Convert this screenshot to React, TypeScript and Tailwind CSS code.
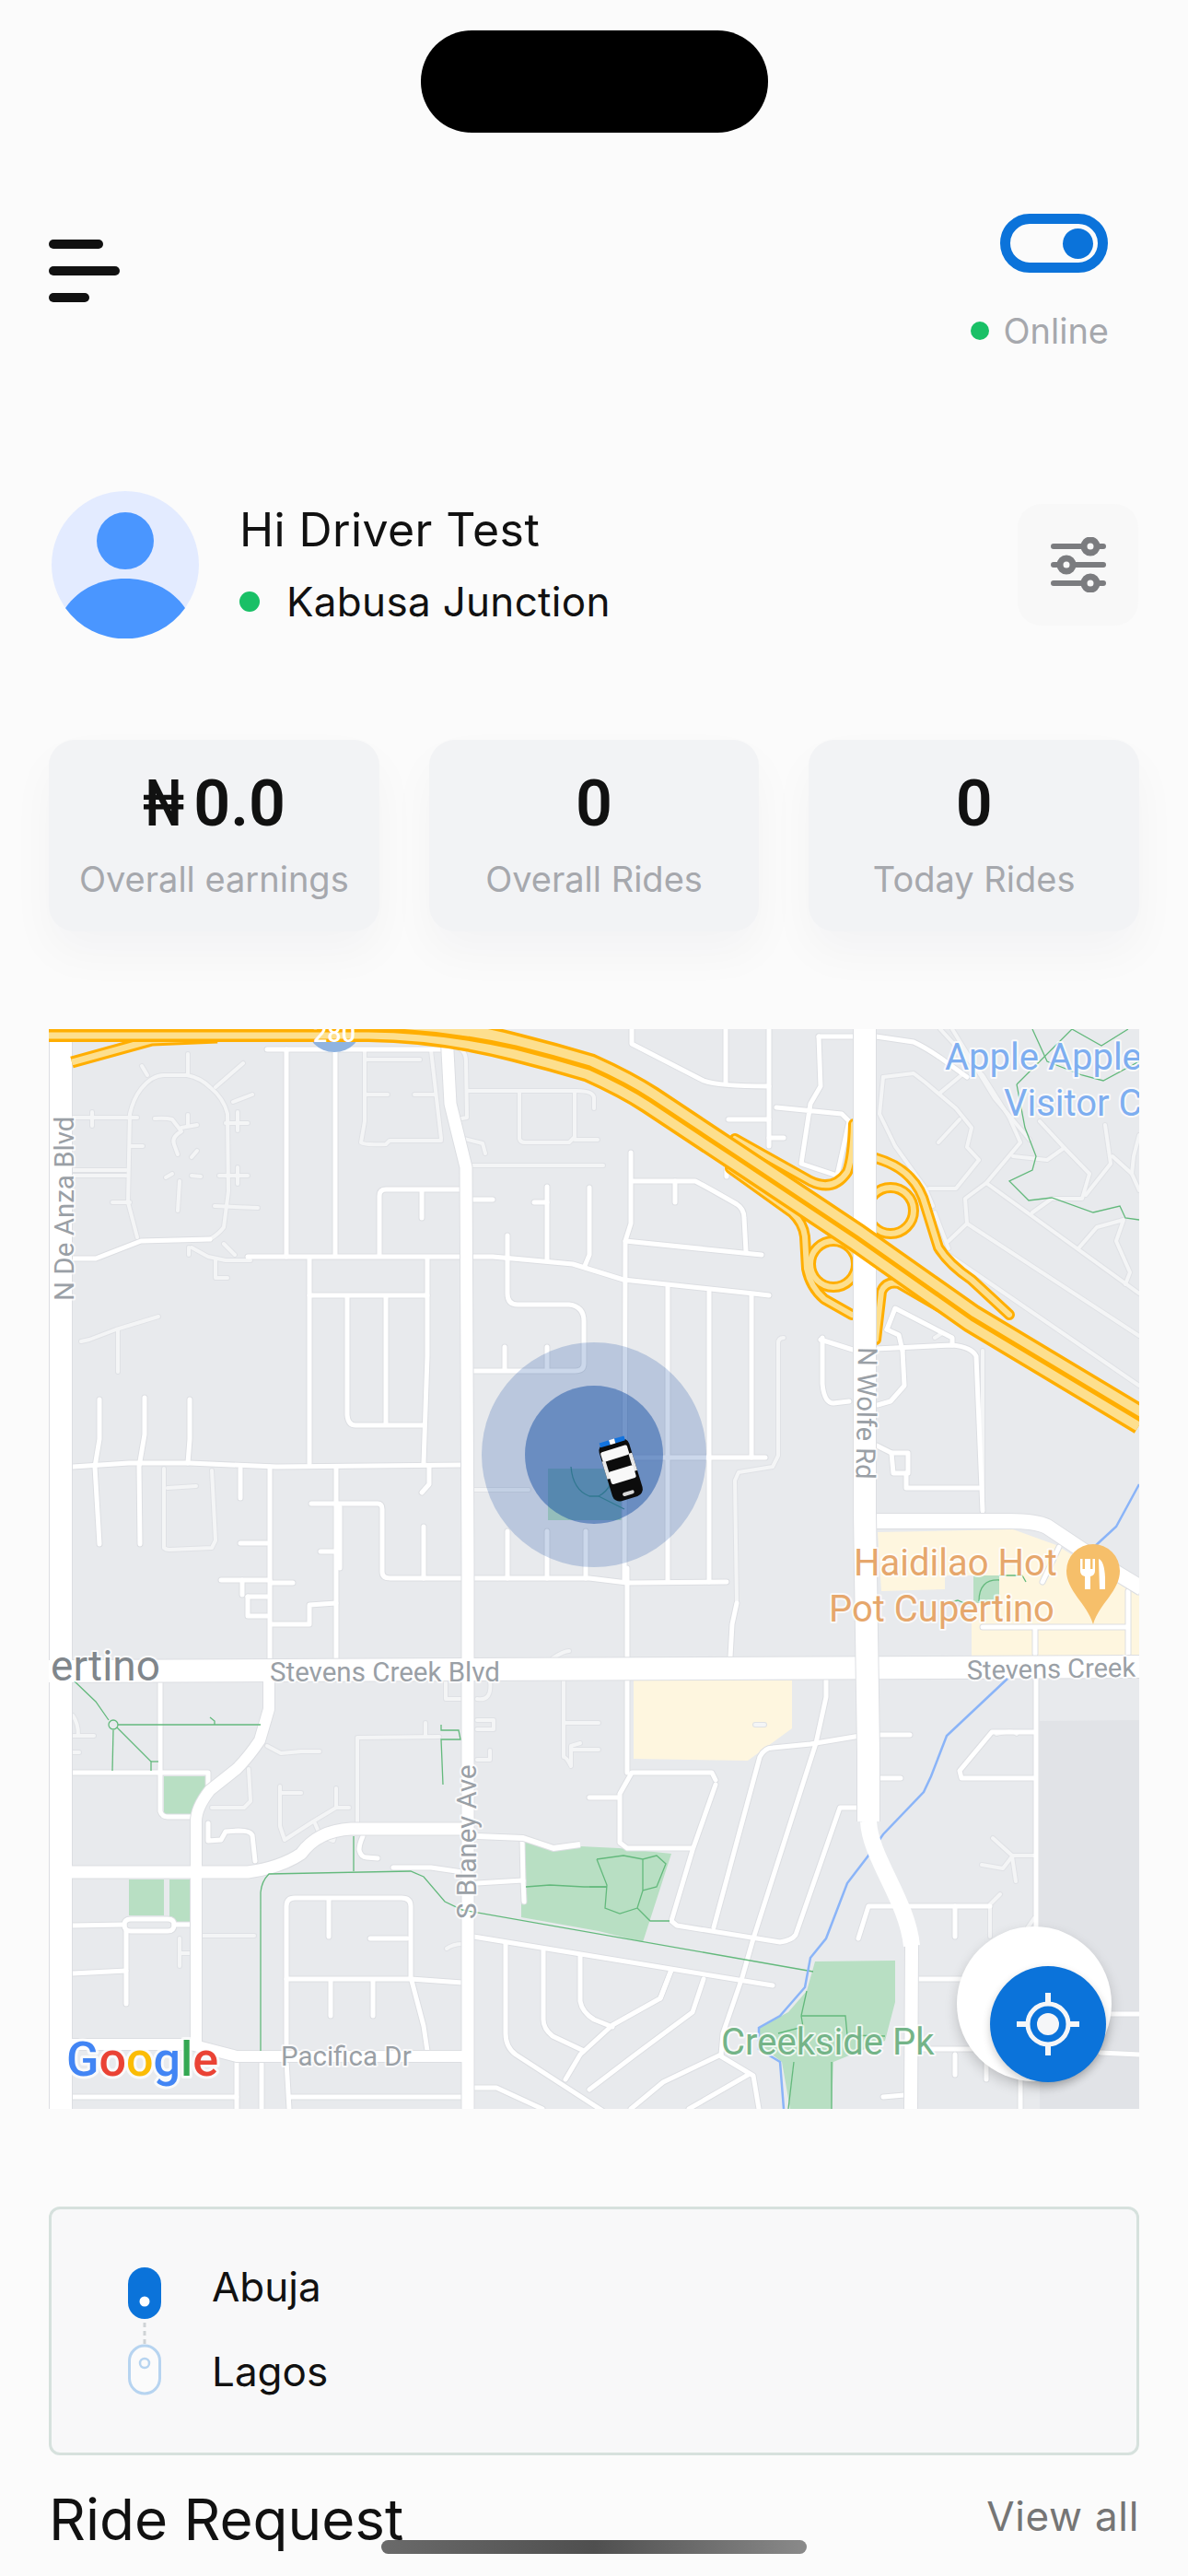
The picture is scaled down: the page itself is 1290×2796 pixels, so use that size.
const parks = [
  "M178,1926 L224,1926 L226,1937 L211,1967 L178,1967 Z",
  "M140,2038 H178 V2077 H140 Z",
  "M184,2038 H206 V2085 H184 Z",
  "M566,1995 L600,2005 L630,2002 L672,2004 L729,2010 L698,2106 L650,2094 L566,2079 Z",
  "M885,2127 L972,2126 L972,2171 L961,2213 L905,2236 L903,2287 L858,2287 L849,2236 L824,2217 L824,2199 L856,2182 L876,2159 Z",
  "M1057,1708 H1085 V1738 H1057 Z",
  "M595,1592 H678 V1648 H595 Z",
];

const beige = [
  "M688,1822 L860,1822 L860,1874 L812,1909 L688,1907 Z",
  "M953,1661 L1100,1658 L1147,1675 L1228,1725 L1237,1730 L1237,1795 L1055,1795 L1055,1737 L1085,1708 L1026,1708 L1026,1723 L957,1725 Z",
];

const faintRoads = [
  "M149,1341 L139,1303 L141,1207 Q145,1190 153,1180 Q165,1165 178,1165 L203,1165 Q218,1168 228,1178 Q243,1190 247,1207 L248,1291 L243,1330 Q238,1337 228,1343",
  "M79,1211 H149", "M100,1205 V1220", "M141,1242 H155", "M79,1274 H137", "M79,1268 H137", "M122,1303 H141",
  "M245,1217 H269", "M238,1274 H269", "M233,1307 L280,1309", "M234,1178 L264,1152", "M253,1194 L274,1186",
  "M154,1155 L160,1165", "M204,1142 V1165", "M258,1205 V1225", "M258,1265 V1283",
  "M168,1212 Q180,1211 187,1213 L197,1226 Q186,1232 189,1240 L193,1251", "M197,1222 L214,1219", "M204,1208 V1220",
  "M195,1280 L193,1312", "M180,1276 L187,1272", "M208,1254 L214,1247", "M208,1274 L218,1275",
  "M88,1454 L97,1452 L126,1441 L172,1427", "M128,1441 V1487",
  "M208,1352 L226,1362 L245,1366 H272", "M234,1366 V1385 H247", "M205,1352 V1360", "M243,1348 L255,1360",
  "M396,1138 V1215 L392,1238 Q395,1241 419,1240 L423,1236 H479", "M396,1148 H456", "M396,1186 H421", "M450,1186 H473",
  "M468,1138 L479,1234", "M493,1134 Q506,1136 506,1150 L507,1211 L495,1213", "M504,1234 L524,1239 L527,1250",
  "M508,1182 H626 Q645,1182 645,1190 V1201", "M564,1184 V1234 Q565,1238 570,1238 H618 L624,1232 V1182", "M624,1235 H649",
  "M512,1263 H655", "M178,1592 V1678 Q180,1680 184,1680 L230,1678 L234,1670 L230,1594", "M182,1613 L213,1611",
  "M514,1615 H574",
  "M290,1893 L305,1901 L327,1899 H347", "M270,1918 L272,1953 L265,1960 H230",
  "M304,1937 V1980 L309,1995 L340,1975 L365,1960 H379", "M304,1944 H327", "M365,1939 V1960", "M342,1977 L348,1991 L362,1996 L365,1985",
  "M388,1977 V1884 L477,1883", "M462,1868 V1883", "M79,1882 H102", "M79,1860 Q85,1868 85,1882", "M79,1900 H86",
  "M195,2102 V2132", "M195,2118 H207", "M220,2099 H276",
  "M485,2113 Q492,2108 502,2108",
  "M484,1822 V1842 H502", "M518,1842 Q535,1845 532,1822", "M518,1865 H536 V1875 H518", "M518,1908 H532 L532,1898",
  "M612,1822 V1905 Q615,1905 620,1915 V1895", "M612,1868 H650", "M620,1897 H650", "M620,1900 V1893 L630,1890", "M600,1798 Q612,1790 618,1790",
  "M959,1167 L992,1163 L1005,1173 L1038,1201 L1055,1222 L1050,1243 L1063,1257 L1038,1288 L1009,1288",
  "M959,1167 L955,1207 L972,1242 L1005,1288 L1013,1307", "M1019,1238 L1042,1213", "M1021,1184 L1044,1165",
  "M1015,1314 L1030,1353", "M1030,1345 L1050,1326 L1237,1448", "M1050,1326 L1048,1299 L1071,1282 L1108,1238 L1096,1211 L1067,1165 L1021,1115",
  "M1034,1115 L1080,1190 L1118,1235", "M1071,1282 L1237,1402", "M1030,1360 L1237,1502",
  "M1121,1314 L1142,1299 H1175 L1183,1272 L1154,1242 L1129,1215", "M1100,1253 L1137,1257 L1154,1245", "M1200,1219 L1206,1261 L1179,1295",
  "M1171,1353 L1191,1330 L1220,1322 L1212,1345 L1227,1379 L1222,1392", "M1229,1272 L1208,1253", "M1237,1230 L1231,1253 L1229,1272 L1237,1290",
  "M851,1450 Q845,1450 845,1456 V1578 L839,1590 L802,1596 L798,1605 L800,1738",
  "M1067,1464 V1638",
  "M1104,1880 Q1100,1875 1082,1880", "M1078,1993 L1089,2003 L1099,2012 H1123", "M1066,2022 L1089,2026 L1099,2013 L1103,2040",
  "M1086,2054 L1075,2065 V2100", "M1116,2090 L1123,2080",
  "M820,1870 H830", "M1015,1450 L1023,1445",
];

const minorRoads = [
  "M290,1137 H485", "M311,1137 V1362", "M364,1138 V1360", "M269,1362 H535 L622,1370 L677,1387 L818,1402 L835,1404",
  "M336,1364 V1586", "M464,1364 V1470 L460,1586", "M336,1404 H464", "M377,1406 V1534 Q378,1545 386,1545 H460", "M419,1406 V1544",
  "M79,1590 L140,1586 L206,1586 L300,1590 L502,1588",
  "M79,1364 H104 L153,1345 L228,1343",
  "M412,1360 V1296 Q412,1289 419,1289 H501", "M458,1291 V1320", "M514,1300 H535", "M580,1303 H594", "M594,1286 V1366", "M640,1287 V1360 L635,1372",
  "M551,1339 V1402 Q551,1414 562,1414 H618 Q634,1416 634,1432 V1478 Q634,1486 624,1486 H514", "M548,1460 V1485", "M594,1460 V1485",
  "M108,1517 V1560 L103,1590 L108,1674", "M157,1515 V1555 L151,1590 L152,1674", "M206,1517 V1560 L204,1586",
  "M261,1592 V1624", "M293,1590 V1799", "M365,1590 V1798", "M338,1630 H410 Q415,1630 415,1636 V1704 Q415,1711 424,1711 H502",
  "M466,1590 V1609 L458,1618", "M261,1673 H290", "M348,1682 H365", "M369,1634 V1700", "M460,1655 V1711",
  "M551,1660 V1711", "M594,1660 V1711", "M636,1660 V1711", "M514,1711 H640 L681,1716 L789,1715",
  "M240,1713 H293", "M263,1713 V1729", "M269,1731 V1752 H290", "M269,1731 H290", "M294,1716 H318", "M294,1761 H336 V1740 L365,1738",
  "M174,1822 V1964 Q176,1970 182,1970 H209", "M79,1922 H226 V1935",
  "M226,1977 V1996 L240,1995 L245,1986 L259,1985 Q272,1985 274,1990 L277,2018",
  "M394,1991 Q390,2000 390,2006 Q392,2014 398,2014 L410,2015", "M427,2025 H468 L502,2030", "M518,2042 L568,2039 L569,2062", "M567,1995 L568,2040",
  "M79,2088 L135,2087", "M142,2081 H182 Q189,2081 189,2087 Q189,2094 182,2094 H142 Q135,2094 135,2087 Q135,2081 142,2081", "M189,2087 H207",
  "M137,2094 V2173", "M79,2140 L137,2137",
  "M311,2230 V2067 Q311,2058 320,2058 H436 Q446,2058 446,2067 V2144 L460,2197 L464,2224", "M357,2060 V2100", "M402,2102 H442",
  "M311,2146 H446 L502,2150", "M359,2148 V2186", "M405,2148 V2186",
  "M514,2100 L839,2153", "M549,2108 V2205 Q549,2220 560,2228 L665,2296", "M590,2115 V2190 Q590,2200 600,2208 L634,2224", "M630,2121 V2170 Q632,2182 645,2190 L665,2198",
  "M614,2255 L630,2228 L665,2196 L717,2167 L729,2136", "M514,2264 H539 L589,2287",
  "M257,2236 V2287", "M284,2238 V2287", "M311,2235 L314,2287", "M79,2274 H257", "M315,2274 H502",
  "M681,1700 V1796", "M681,1820 V1922", "M777,1930 L773,1922 H686 L673,1945 V1998 L681,2004 H752", "M640,1949 H671",
  "M777,1935 L752,2006 L729,2083 L735,2088 L847,2106 Q860,2104 864,2098 L912,1960 H934",
  "M934,1882 L880,1891 L839,1895 Q830,1895 825,1905 L775,2090", "M897,1822 V1840 L886,1890 L818,2102 L806,2144 L785,2205 L783,2228",
  "M955,1881 H988", "M955,1928 H978", "M1125,1820 V2095",
  "M1123,1878 H1077 L1042,1920 L1044,1928 H1123", "M932,2102 L943,2067 H1075", "M1037,2067 V2100",
  "M997,2146 H1044", "M1204,2184 H1237", "M1195,2226 L1237,2228", "M997,2222 H1096", "M1037,2228 V2250", "M1071,2235 V2255", "M1108,2255 V2287", "M959,2274 L982,2272",
  "M764,2146 L752,2182 L690,2228 L640,2266", "M783,2228 L720,2258 L685,2287", "M783,2230 L818,2251 L824,2287", "M814,2249 L748,2287", "M729,2136 L717,2167",
  "M686,1115 V1131 L764,1171 Q780,1177 835,1177", "M788,1115 V1173", "M835,1115 V1242", "M835,1233 H851", "M791,1213 H835",
  "M889,1123 H951 L992,1129 Q1005,1135 1021,1146 L1050,1167", "M889,1123 L891,1177 L880,1196 L870,1261 L909,1274 L922,1215 L914,1207 L843,1200",
  "M685,1249 V1326 L679,1345 L678,1715", "M686,1280 H755 Q765,1285 800,1305 Q808,1310 808,1320 L810,1356", "M733,1280 V1303", "M679,1345 L827,1360",
  "M725,1395 V1715", "M770,1400 V1715", "M816,1404 V1580", "M677,1580 H831", "M789,1261 V1275",
  "M891,1452 L926,1463", "M893,1450 V1500 Q895,1521 905,1521 L922,1519",
  "M951,1462 L1034,1458 Q1055,1460 1060,1470 L1067,1638", "M980,1464 L982,1502 L967,1519 L953,1523",
  "M963,1441 L972,1418 L1034,1450 V1458", "M963,1441 L976,1447 L980,1464",
  "M968,1575 H986 V1597 H970 Z", "M952,1567 L968,1575", "M984,1597 V1613 H1063",
  "M800,1738 L795,1761 L793,1796",
  "M1067,1764 H1223", "M1124,1767 V1793", "M1225,1725 V1793", "M1150,1677 L1132,1715",
];

const greenLines = [
  "M81,1823 L104,1845 L118,1865", "M128,1870 H283", "M123,1876 L122,1920", "M127,1873 L164,1910 V1920", "M164,1910 H172", "M228,1862 L233,1866 V1870",
  "M479,1870 V1876 H498 L500,1886 H479 L481,1935", "M283,2224 V2052 Q284,2040 292,2032 L446,2029 L460,2035 L483,2062 L502,2071 L883,2138", "M384,1991 V2029",
  "M648,2016 L677,2012 L698,2016 L713,2012 L723,2021 L713,2046 L698,2050 V2016 M698,2050 L692,2069 L673,2075 L657,2069 L659,2044 L648,2016",
  "M692,2069 L706,2083 H727", "M640,2046 H659", "M571,2046 L597,2044 L634,2046 H659",
  "M870,2186 H918 L920,2207 L961,2208", "M870,2186 L872,2198 L845,2205", "M876,2159 L870,2186", "M856,2287 L862,2236", "M903,2236 V2287",
  "M1104,1175 L1164,1115 L1196,1133 L1225,1115", "M1121,1115 L1137,1150 L1175,1165 L1198,1171 L1237,1150",
  "M1104,1175 L1113,1222 L1125,1253 L1121,1268 L1096,1280 L1117,1301 L1142,1298 L1187,1314 L1216,1307 L1222,1320 L1237,1322",
  "M1032,1737 L1040,1735 L1047,1738 H1057", "M1085,1708 L1110,1708 L1114,1715", "M1063,1736 Q1063,1712 1085,1713",
  "M620,1590 Q622,1615 640,1622 L650,1622 Q668,1612 665,1590", "M650,1622 L678,1636",
];

const stream = "M1094,1820 L1028,1882 L1011,1926 L1003,1943 L959,1989 L943,2012 L920,2042 L897,2102 L880,2123 L874,2155 L847,2186 L824,2199 L824,2222 L847,2236 L851,2287";

const ramps = [
  "M798,1234 L880,1280 Q905,1292 920,1270 Q926,1255 927,1218",
  "M793,1266 L860,1314 Q872,1325 874,1340 L876,1375 Q880,1395 895,1408 L925,1425",
  "M951,1255 Q975,1262 988,1276 Q1000,1288 1005,1307 L1019,1352 Q1030,1370 1055,1387 L1096,1425",
  "M1071,1446 L976,1391 Q962,1388 957,1400 L951,1452",
];

const highway = "M53,1113 H400 Q480,1114 560,1135 Q600,1145 640,1157 Q680,1175 706,1192 L798,1253 L930,1341 L1055,1429 L1240,1540";

function App() {
  return (
    <div className="relative flex h-[2796px] w-[1290px] flex-col overflow-hidden bg-[#FBFBFB] [font-family:Inter,sans-serif]">
      <div className="mx-auto mt-[33px] h-[111px] w-[377px] shrink-0 rounded-[55px] bg-black" />

      <header className="mt-[88px] flex h-[157px] shrink-0 items-start justify-between pl-[53px] pr-[86px]">
        <div className="mt-[28px] flex flex-col gap-[19px]">
          <div className="h-[10px] w-[59px] rounded-full bg-[#111111]" />
          <div className="h-[10px] w-[77px] rounded-full bg-[#111111]" />
          <div className="h-[10px] w-[44px] rounded-full bg-[#111111]" />
        </div>
        <div className="flex flex-col items-end">
          <div className="mr-px flex h-[64px] w-[117px] items-center justify-end rounded-full border-[11px] border-[#0B73DA] pr-[5px]">
            <div className="h-[33px] w-[33px] rounded-full bg-[#0B73DA]" />
          </div>
          <div className="mt-[40px] flex items-center gap-[15px]">
            <div className="h-[20px] w-[20px] rounded-full bg-[#19C066]" />
            <span className="text-[38px] leading-[46px] text-[#A6A8AD]">Online</span>
          </div>
        </div>
      </header>

      <section className="mt-[144px] flex shrink-0 items-center justify-between pl-[56px] pr-[54px]">
        <div className="flex items-center gap-[44px]">
          <svg width="160" height="160" viewBox="0 0 160 160">
            <circle cx="80" cy="80" r="80" fill="#E3EBFF" />
            <circle cx="80" cy="54" r="31" fill="#4A96FF" />
            <path d="M15,127 C30,105 55,95 80,95 C105,95 130,105 145,127 A80,80 0 0 1 15,127 Z" fill="#4A96FF" />
          </svg>
          <div className="flex flex-col">
            <span className="-mt-[2px] text-[50px] leading-[60px] tracking-[0.4px] text-[#111111]">Hi Driver Test</span>
            <div className="mt-[22px] flex items-center gap-[29px]">
              <div className="h-[22px] w-[22px] rounded-full bg-[#19C066]" />
              <span className="text-[44px] leading-[52px] tracking-[0.3px] text-[#111111]">Kabusa Junction</span>
            </div>
          </div>
        </div>
        <button type="button" className="flex h-[132px] w-[131px] items-center justify-center rounded-[26px] bg-[#F8F8F8]">
          <svg width="60" height="60" viewBox="0 0 60 60" fill="none" stroke="#7B7C7F" strokeWidth="6" strokeLinecap="round">
            <path d="M3,10 H57 M3,30 H57 M3,50 H57" />
            <g fill="#F8F8F8" strokeWidth="7">
              <circle cx="43" cy="10" r="7" />
              <circle cx="17" cy="30" r="7" />
              <circle cx="43" cy="50" r="7" />
            </g>
          </svg>
        </button>
      </section>

      <section className="mt-[110px] grid shrink-0 grid-cols-3 gap-[54px] px-[53px]">
        {[
          { currency: "₦", value: "0.0", label: "Overall earnings" },
          { currency: "", value: "0", label: "Overall Rides" },
          { currency: "", value: "0", label: "Today Rides" },
        ].map((stat) => (
          <div
            key={stat.label}
            className="flex h-[208px] flex-col items-center rounded-[28px] bg-[#F2F3F5] pt-[27px] shadow-[0_24px_50px_rgba(40,40,60,0.035)]"
          >
            <span className="text-[70px] font-semibold leading-[84px] text-[#111111] [font-family:Roboto,sans-serif]">
              {stat.currency && <span className="-mr-px inline-block origin-left scale-x-[0.8]">{stat.currency}</span>}
              {stat.value}
            </span>
            <span className="mt-[16px] text-[38px] leading-[48px] text-[#A6A8AD]">{stat.label}</span>
          </div>
        ))}
      </section>

      <section className="relative mx-[53px] mt-[106px] h-[1172px] shrink-0">
        <svg width="1184" height="1172" viewBox="53 1115 1184 1172" className="block [font-family:Roboto,sans-serif]" fill="none">
          <rect x="53" y="1115" width="1184" height="1172" fill="#E8EAED" />
          <path d="M1129,1866 L1237,1865 V2287 H1129 Z" fill="#E1E3E7" />
          {beige.map((d) => <path key={d} d={d} fill="#FEF6DF" />)}
          {parks.map((d) => <path key={d} d={d} fill="#B8DFC3" />)}

          <g strokeLinecap="round" strokeLinejoin="round">
            {faintRoads.map((d) => <path key={d} d={d} stroke="#DFE1E5" strokeWidth="6" />)}
            {minorRoads.map((d) => <path key={d} d={d} stroke="#DCDEE2" strokeWidth="7" />)}
            {faintRoads.map((d) => <path key={d} d={d} stroke="#F4F5F6" strokeWidth="4" />)}
            {minorRoads.map((d) => <path key={d} d={d} stroke="#FFFFFF" strokeWidth="5" />)}
          </g>

          <g stroke="#DCDEE2" strokeLinejoin="round" strokeWidth="26">
            <path d="M53,1812 L1237,1807" />
            <path d="M66,1128 V2287" />
            <path d="M952,1649 H1096 Q1125,1649 1137,1655 L1212,1705 L1240,1722" strokeWidth="18" />
            <path d="M78,2030 H269 Q305,2025 327,2010 Q345,1985 381,1983 H502" strokeWidth="15" />
            <path d="M292,1822 V1853 L282,1887 Q270,1905 257,1918 L228,1941 Q213,1960 213,1975 V2217" strokeWidth="14" />
            <path d="M78,2217 H207 L257,2230 H502" strokeWidth="14" />
            <path d="M485,1120 L489,1196 L506,1265 L508,1700 V2287" strokeWidth="15" />
            <path d="M518,1991 L568,1993 L601,2004 L630,2000" strokeWidth="8" />
            <path d="M943,1975 C945,2015 985,2060 990,2110 L989,2287" strokeWidth="16" />
          </g>
          <g stroke="#FFFFFF" strokeLinejoin="round" strokeWidth="24">
            <path d="M53,1812 L1237,1807" />
            <path d="M66,1128 V2287" />
            <path d="M952,1649 H1096 Q1125,1649 1137,1655 L1212,1705 L1240,1722" strokeWidth="16" />
            <path d="M78,2030 H269 Q305,2025 327,2010 Q345,1985 381,1983 H502" strokeWidth="13" />
            <path d="M292,1822 V1853 L282,1887 Q270,1905 257,1918 L228,1941 Q213,1960 213,1975 V2217" strokeWidth="12" />
            <path d="M78,2217 H207 L257,2230 H502" strokeWidth="12" />
            <path d="M485,1120 L489,1196 L506,1265 L508,1700 V2287" strokeWidth="13" />
            <path d="M518,1991 L568,1993 L601,2004 L630,2000" strokeWidth="6" />
            <path d="M943,1975 C945,2015 985,2060 990,2110 L989,2287" strokeWidth="14" />
          </g>

          <g strokeWidth="1.3">
            {greenLines.map((d) => <path key={d} d={d} stroke="#63B97C" />)}
            <circle cx="123" cy="1870" r="5" stroke="#63B97C" />
            <path d={stream} stroke="#8AB4F8" strokeWidth="2.5" />
            <path d="M1237,1609 L1212,1655 L1187,1678" stroke="#8AB4F8" strokeWidth="2.5" />
          </g>

          <circle cx="363" cy="1109" r="31" fill="#8FB3E0" />

          <g>
            <g stroke="#FFAE00" strokeWidth="12" strokeLinecap="round" strokeLinejoin="round">
              {ramps.map((d) => <path key={d} d={d} />)}
              <circle cx="905" cy="1370" r="25" />
              <circle cx="967" cy="1312" r="25" />
            </g>
            <g stroke="#FDDF8E" strokeWidth="6" strokeLinecap="round" strokeLinejoin="round">
              {ramps.map((d) => <path key={d} d={d} />)}
              <circle cx="905" cy="1370" r="25" />
              <circle cx="967" cy="1312" r="25" />
            </g>
          </g>

          <path d="M939,1115 L939,1640 L943,1900 L943,1975" stroke="#DCDEE2" strokeWidth="26" />
          <path d="M939,1115 L939,1640 L943,1900 L943,1975" stroke="#FFFFFF" strokeWidth="24" />
          <path d="M943,1975 C945,2015 985,2060 990,2110" stroke="#FFFFFF" strokeWidth="18" />

          <path d="M78,1151 L165,1127 L236,1124" stroke="#FFAE00" strokeWidth="13" />
          <path d="M78,1151 L165,1127 L236,1124" stroke="#FDDF8E" strokeWidth="7" />
          <g strokeLinejoin="round">
            <path d={highway} stroke="#FFAE00" strokeWidth="32" />
            <path d={highway} stroke="#FDDF8E" strokeWidth="25" />
            <path d="M53,1116 H400 Q480,1117 560,1135 Q600,1145 640,1157 Q680,1175 706,1192 L798,1253 L930,1341 L1055,1429 L1240,1540" stroke="#FFAE00" strokeWidth="5" />
          </g>

          <circle cx="645" cy="1577" r="122" fill="#0D47A1" fillOpacity="0.21" />
          <circle cx="645" cy="1577" r="75" fill="#0D47A1" fillOpacity="0.46" />
          <g transform="translate(674 1593) rotate(-17)">
            <rect x="-17" y="-32" width="34" height="65" rx="8" fill="#0C0C0C" />
            <path d="M-14,-34 H-3 V-29 H-14 Z M3,-34 H14 V-29 H3 Z" fill="#1273DE" />
            <rect x="-3" y="-34" width="6" height="5" fill="#FFFFFF" />
            <rect x="-16" y="-24" width="30" height="11" rx="2" fill="#F8F8F8" />
            <path d="M-17,-14 L-13,-14 L-13,6 L-17,6 Z M17,-14 L13,-14 L13,6 L17,6 Z" fill="#E8E8E8" />
            <rect x="-14" y="-1" width="28" height="14" rx="2" fill="#F8F8F8" />
            <rect x="-6" y="25" width="13" height="4" rx="2" fill="#D8D8D8" />
          </g>

          <g className="[paint-order:stroke]" stroke="#FFFFFF" strokeOpacity="0.75" strokeWidth="4" strokeLinejoin="round">
            <text x="363" y="1129" fill="#FFFFFF" stroke="none" fontSize="27" fontWeight="500" textAnchor="middle">280</text>
            <text transform="translate(80 1410) rotate(-90)" fill="#9AA0A6" fontSize="29.5">N De Anza Blvd</text>
            <text transform="translate(932 1460) rotate(91)" fill="#9AA0A6" fontSize="29">N Wolfe Rd</text>
            <text transform="translate(517 2081) rotate(-90)" fill="#9AA0A6" fontSize="29.5">S Blaney Ave</text>
            <text x="293" y="1823" fill="#9AA0A6" fontSize="29.5">Stevens Creek Blvd</text>
            <text transform="translate(1050 1821) rotate(-1)" fill="#9AA0A6" fontSize="29">Stevens Creek</text>
            <text x="305" y="2240" fill="#9AA0A6" fontSize="29.5">Pacifica Dr</text>
            <text x="55" y="1822" fill="#80868B" fontSize="46">ertino</text>
            <text x="1026" y="1159" fill="#7EAEF0" fontSize="40">Apple Apple</text>
            <text x="1090" y="1209" fill="#7EAEF0" fontSize="40">Visitor C</text>
            <text x="927" y="1708" fill="#E6A76C" fontSize="40">Haidilao Hot</text>
            <text x="900" y="1758" fill="#E6A76C" fontSize="40">Pot Cupertino</text>
            <text x="783" y="2228" fill="#74B488" fontSize="40">Creekside Pk</text>
            <text x="72" y="2251" fontSize="52" fontWeight="500" strokeWidth="6">
              <tspan fill="#4285F4">G</tspan>
              <tspan fill="#EA4335">o</tspan>
              <tspan fill="#FBBC05">o</tspan>
              <tspan fill="#4285F4">g</tspan>
              <tspan fill="#34A853">l</tspan>
              <tspan fill="#EA4335">e</tspan>
            </text>
          </g>

          <path d="M1187,1674 A29,29 0 0 1 1216,1703 C1216,1725 1194,1738 1187,1761 C1180,1738 1158,1725 1158,1703 A29,29 0 0 1 1187,1674 Z" fill="#F6BF6A" />
          <path d="M1173,1690 V1703 Q1173,1708 1178,1709 V1723 H1184 V1709 Q1189,1708 1189,1703 V1690 H1186.5 V1701 H1184 V1690 H1178 V1701 H1175.5 V1690 Z M1193,1690 Q1199,1692 1200,1710 V1723 H1194 Z" fill="#FFFFFF" />
        </svg>

        <div className="absolute left-[986px] top-[974px] h-[168px] w-[168px] rounded-full bg-white shadow-[0_6px_14px_rgba(0,0,0,0.18)]" />
        <div className="absolute left-[1022px] top-[1017px] flex h-[126px] w-[126px] items-center justify-center rounded-full bg-[#0B73DA] shadow-[0_4px_10px_rgba(0,0,0,0.2)]">
          <svg width="68" height="68" viewBox="0 0 68 68" fill="none" stroke="#F5F6F8" strokeWidth="5">
            <circle cx="34" cy="34" r="22" />
            <circle cx="34" cy="34" r="12" fill="#F5F6F8" stroke="none" />
            <path d="M34,0 V12 M34,56 V68 M0,34 H12 M56,34 H68" strokeWidth="6" />
          </svg>
        </div>
      </section>

      <section className="mx-[53px] mt-[106px] flex h-[270px] shrink-0 rounded-[12px] border-[3px] border-[#D6E1DD] bg-[#F8F8F9] pl-[81px] pt-[63px]">
        <svg width="40" height="140" viewBox="0 0 40 140" fill="none" className="shrink-0">
          <rect x="2" y="0" width="36" height="56" rx="18" fill="#0B73DA" />
          <circle cx="20" cy="37" r="5.5" fill="#FFFFFF" />
          <path d="M20,60 V83" stroke="#CFD3D6" strokeWidth="3" strokeDasharray="5 4" />
          <rect x="3.5" y="85" width="33" height="52" rx="16.5" fill="#FBFBFB" stroke="#B7D4F0" strokeWidth="3" />
          <circle cx="20" cy="104" r="5" stroke="#B7D4F0" strokeWidth="2.5" />
        </svg>
        <div className="ml-[53px] flex flex-col gap-[41px] text-[#111111]">
          <span className="-mt-[4px] text-[44px] leading-[51px]">Abuja</span>
          <span className="text-[44px] leading-[51px]">Lagos</span>
        </div>
      </section>

      <section className="mx-[53px] mt-[33px] flex items-start justify-between">
        <span className="text-[62px] leading-[74px] text-[#111111]">Ride Request</span>
        <span className="mt-[3px] text-[44px] leading-[60px] tracking-[0.7px] text-[#757575]">View all</span>
      </section>

      <div className="absolute left-[414px] top-[2757px] h-[15px] w-[462px] rounded-[8px] bg-[linear-gradient(90deg,#6A6A6A,#4F4F4F_50%,#8A8A8A)]" />
    </div>
  );
}

export default App;
